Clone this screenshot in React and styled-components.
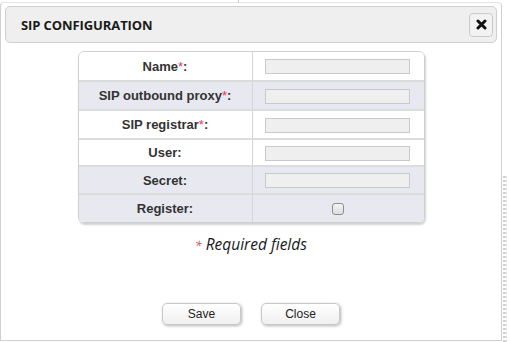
import React from "react";
import styled, { createGlobalStyle } from "styled-components";

const Global = createGlobalStyle`
  html, body { margin: 0; padding: 0; background: #fff; }
  body { width: 510px; height: 342px; overflow: hidden; font-family: "Liberation Sans", Arial, sans-serif; }
`;

const Page = styled.div`
  position: relative;
  width: 510px;
  height: 342px;
  display: flex;
  align-items: flex-start;
  background: #fff;
`;

const BackTop = styled.div`
  position: absolute;
  top: 0;
  left: 238px;
  width: 1px;
  height: 3px;
  background: #ccc;
`;

const Dialog = styled.div`
  margin-top: 2px;
  width: 502px;
  height: 339px;
  box-sizing: border-box;
  border: 1px solid #d0d0d0;
  border-top-color: #e4e4e4;
  border-radius: 4px 4px 0 0;
  background: #fff;
  padding: 3px 4px 0 4px;
  display: flex;
  flex-direction: column;
  align-items: stretch;
`;

const SideStrip = styled.div`
  margin-top: 176px;
  margin-left: 1px;
  width: 4px;
  height: 166px;
  border-left: 2px dotted #cfcfcf;
  border-right: 2px dotted #dcdcdc;
  box-sizing: border-box;
`;

const TitleBar = styled.div`
  height: 37px;
  box-sizing: border-box;
  border: 1px solid #cfcfcf;
  border-radius: 5px;
  background: #efefef;
  display: flex;
  align-items: center;
  justify-content: space-between;
  padding: 0 3px 0 15px;
`;

const Title = styled.span`
  font-family: "Open Sans", "DejaVu Sans", sans-serif;
  font-weight: 700;
  font-size: 13px;
  color: #1a1a1a;
  letter-spacing: -0.1px;
`;

const CloseX = styled.button`
  width: 24px;
  height: 24px;
  box-sizing: border-box;
  border: 1px solid #cacaca;
  border-radius: 4px;
  background: #f2f2f2;
  padding: 0;
  display: flex;
  align-items: center;
  justify-content: center;
`;

const Body = styled.div`
  display: flex;
  flex-direction: column;
  align-items: center;
  padding-top: 8px;
`;

const Table = styled.div`
  width: 347px;
  box-sizing: border-box;
  border: 1px solid #cfcfcf;
  border-radius: 6px;
  overflow: hidden;
  box-shadow: 1px 2px 2px rgba(0, 0, 0, 0.18);
  display: grid;
  grid-template-columns: 174px 1fr;
`;

const Label = styled.div`
  height: ${(p) => p.h}px;
  box-sizing: border-box;
  background: ${(p) => (p.alt ? "#e8e8f0" : "#fff")};
  border-top: ${(p) => (p.first ? "none" : "2px solid #dcdcdc")};
  border-right: 1px solid #d4d4d4;
  display: flex;
  align-items: center;
  justify-content: center;
  font-family: "Liberation Sans", Arial, sans-serif;
  font-weight: 700;
  font-size: 13px;
  color: #333;
`;

const Cell = styled.div`
  height: ${(p) => p.h}px;
  box-sizing: border-box;
  background: ${(p) => (p.alt ? "#e8e8f0" : "#fff")};
  border-top: ${(p) => (p.first ? "none" : "2px solid #dcdcdc")};
  display: flex;
  align-items: center;
  justify-content: ${(p) => (p.center ? "center" : "flex-start")};
  padding-left: ${(p) => (p.center ? "0" : "12px")};
`;

const Star = styled.span`
  color: #f0305a;
  font-weight: 400;
`;

const Input = styled.input`
  width: 145px;
  height: 15px;
  box-sizing: border-box;
  border: 1px solid #c9c9c9;
  background: #efefef;
  padding: 0;
  margin: 0;
  margin-top: 1px;
`;

const Check = styled.span`
  display: inline-block;
  width: 12px;
  height: 12px;
  box-sizing: border-box;
  border: 1px solid #8e8e8e;
  border-radius: 3px;
  background: linear-gradient(#f4f4f4, #dedede);
`;

const Required = styled.div`
  margin-top: 10px;
  font-family: "Open Sans", "DejaVu Sans", sans-serif;
  font-style: italic;
  font-size: 15.5px;
  color: #1a1a1a;
`;

const RedStar = styled.span`
  color: #e8405a;
  font-size: 12px;
  margin-right: 4px;
`;

const Buttons = styled.div`
  margin-top: 48px;
  display: flex;
  gap: 20px;
  justify-content: center;
`;

const Button = styled.button`
  width: 79px;
  height: 22px;
  box-sizing: border-box;
  border: 1px solid #c8c8c8;
  border-radius: 5px;
  background: linear-gradient(#ffffff, #efefef);
  box-shadow: 1px 1px 3px rgba(0, 0, 0, 0.3);
  font-family: "Liberation Sans", Arial, sans-serif;
  font-size: 12px;
  color: #222;
  padding: 0;
`;

const rows = [
  { label: "Name", req: true, h: 28 },
  { label: "SIP outbound proxy", req: true, alt: true, h: 29 },
  { label: "SIP registrar", req: true, h: 29 },
  { label: "User", h: 27 },
  { label: "Secret", alt: true, h: 28 },
  { label: "Register", alt: true, check: true, h: 29 },
];

export default function App() {
  return (
    <>
      <Global />
      <Page>
        <BackTop />
        <Dialog>
          <TitleBar>
            <Title>SIP CONFIGURATION</Title>
            <CloseX aria-label="close">
              <svg width="11" height="11" viewBox="0 0 11 11">
                <path d="M2 2 L9 9 M9 2 L2 9" stroke="#111" strokeWidth="3" strokeLinecap="round" />
              </svg>
            </CloseX>
          </TitleBar>
          <Body>
            <Table>
              {rows.map((r, i) => (
                <React.Fragment key={r.label}>
                  <Label alt={r.alt} first={i === 0} h={r.h}>
                    {r.label}
                    {r.req && <Star>*</Star>}:
                  </Label>
                  <Cell alt={r.alt} first={i === 0} h={r.h} center={r.check}>
                    {r.check ? <Check /> : <Input type="text" />}
                  </Cell>
                </React.Fragment>
              ))}
            </Table>
            <Required>
              <RedStar>*</RedStar>Required fields
            </Required>
            <Buttons>
              <Button>Save</Button>
              <Button>Close</Button>
            </Buttons>
          </Body>
        </Dialog>
        <SideStrip />
      </Page>
    </>
  );
}
